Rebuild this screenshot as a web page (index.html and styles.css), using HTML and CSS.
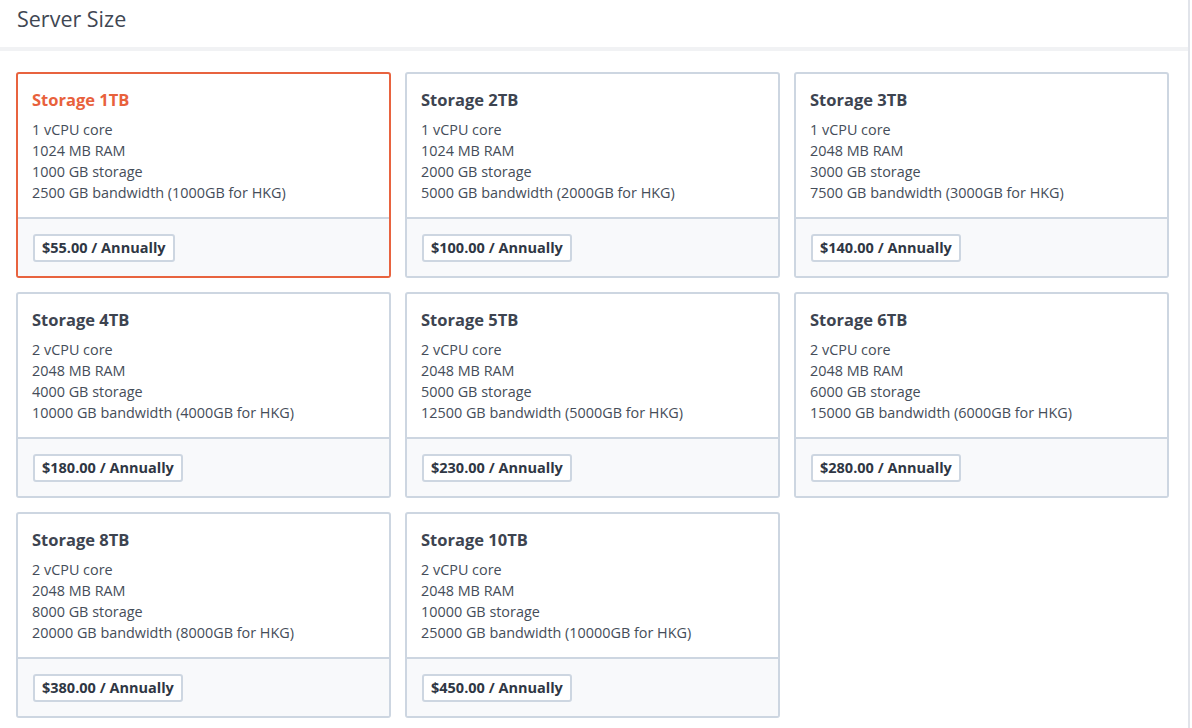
FILE: index.html
```html
<!DOCTYPE html>
<html>
<head>
<meta charset="utf-8">
<link rel="stylesheet" href="styles.css">
</head>
<body>
<div class="panel">
  <div class="panel-head">Server Size</div>
  <div class="grid">
    <div class="card selected">
      <div class="card-body">
        <div class="title">Storage 1TB</div>
        <div class="line">1 vCPU core</div>
        <div class="line">1024 MB RAM</div>
        <div class="line">1000 GB storage</div>
        <div class="line">2500 GB bandwidth (1000GB for HKG)</div>
      </div>
      <div class="card-foot"><span class="price">$55.00 / Annually</span></div>
    </div>
    <div class="card">
      <div class="card-body">
        <div class="title">Storage 2TB</div>
        <div class="line">1 vCPU core</div>
        <div class="line">1024 MB RAM</div>
        <div class="line">2000 GB storage</div>
        <div class="line">5000 GB bandwidth (2000GB for HKG)</div>
      </div>
      <div class="card-foot"><span class="price">$100.00 / Annually</span></div>
    </div>
    <div class="card">
      <div class="card-body">
        <div class="title">Storage 3TB</div>
        <div class="line">1 vCPU core</div>
        <div class="line">2048 MB RAM</div>
        <div class="line">3000 GB storage</div>
        <div class="line">7500 GB bandwidth (3000GB for HKG)</div>
      </div>
      <div class="card-foot"><span class="price">$140.00 / Annually</span></div>
    </div>
    <div class="card">
      <div class="card-body">
        <div class="title">Storage 4TB</div>
        <div class="line">2 vCPU core</div>
        <div class="line">2048 MB RAM</div>
        <div class="line">4000 GB storage</div>
        <div class="line">10000 GB bandwidth (4000GB for HKG)</div>
      </div>
      <div class="card-foot"><span class="price">$180.00 / Annually</span></div>
    </div>
    <div class="card">
      <div class="card-body">
        <div class="title">Storage 5TB</div>
        <div class="line">2 vCPU core</div>
        <div class="line">2048 MB RAM</div>
        <div class="line">5000 GB storage</div>
        <div class="line">12500 GB bandwidth (5000GB for HKG)</div>
      </div>
      <div class="card-foot"><span class="price">$230.00 / Annually</span></div>
    </div>
    <div class="card">
      <div class="card-body">
        <div class="title">Storage 6TB</div>
        <div class="line">2 vCPU core</div>
        <div class="line">2048 MB RAM</div>
        <div class="line">6000 GB storage</div>
        <div class="line">15000 GB bandwidth (6000GB for HKG)</div>
      </div>
      <div class="card-foot"><span class="price">$280.00 / Annually</span></div>
    </div>
    <div class="card">
      <div class="card-body">
        <div class="title">Storage 8TB</div>
        <div class="line">2 vCPU core</div>
        <div class="line">2048 MB RAM</div>
        <div class="line">8000 GB storage</div>
        <div class="line">20000 GB bandwidth (8000GB for HKG)</div>
      </div>
      <div class="card-foot"><span class="price">$380.00 / Annually</span></div>
    </div>
    <div class="card">
      <div class="card-body">
        <div class="title">Storage 10TB</div>
        <div class="line">2 vCPU core</div>
        <div class="line">2048 MB RAM</div>
        <div class="line">10000 GB storage</div>
        <div class="line">25000 GB bandwidth (10000GB for HKG)</div>
      </div>
      <div class="card-foot"><span class="price">$450.00 / Annually</span></div>
    </div>
  </div>
</div>
</body>
</html>
```
FILE: styles.css
```css
html, body {
  margin: 0;
  padding: 0;
  background: #ffffff;
}
body {
  font-family: "Open Sans", "Noto Sans", sans-serif;
  color: #454d59;
}
.panel {
  width: 1190px;
  border-right: 2px solid #e1e4ea;
  min-height: 728px;
  box-sizing: border-box;
}
.panel-head {
  height: 51px;
  box-sizing: border-box;
  padding: 4px 0 0 17px;
  font-size: 21.5px;
  line-height: 30px;
  color: #3f4753;
  border-bottom: 4px solid #f1f2f4;
}
.grid {
  display: grid;
  grid-template-columns: repeat(3, 375px);
  grid-auto-rows: 206px;
  column-gap: 14px;
  row-gap: 14px;
  padding: 21px 0 0 16px;
}
.card {
  border: 2px solid #cdd6e1;
  border-radius: 3px;
  display: flex;
  flex-direction: column;
  overflow: hidden;
}
.card.selected {
  border-color: #e8633f;
}
.card-body {
  height: 145px;
  box-sizing: border-box;
  padding: 15px 14px 0 14px;
  border-bottom: 2px solid #cdd6e1;
}
.title {
  font-size: 16.5px;
  font-weight: 700;
  line-height: 22px;
  color: #3d4450;
  margin-bottom: 8px;
}
.selected .title {
  color: #e8613c;
}
.line {
  font-size: 14.4px;
  line-height: 21px;
}
.card-foot {
  flex: 1;
  background: #f8f9fb;
  padding: 15px 14px 0 15px;
}
.price {
  display: inline-block;
  border: 2px solid #cdd6e1;
  border-radius: 3px;
  background: #ffffff;
  padding: 0 7px;
  height: 28px;
  box-sizing: border-box;
  line-height: 24px;
  font-size: 14.5px;
  font-weight: 700;
  color: #2f3744;
}
```
